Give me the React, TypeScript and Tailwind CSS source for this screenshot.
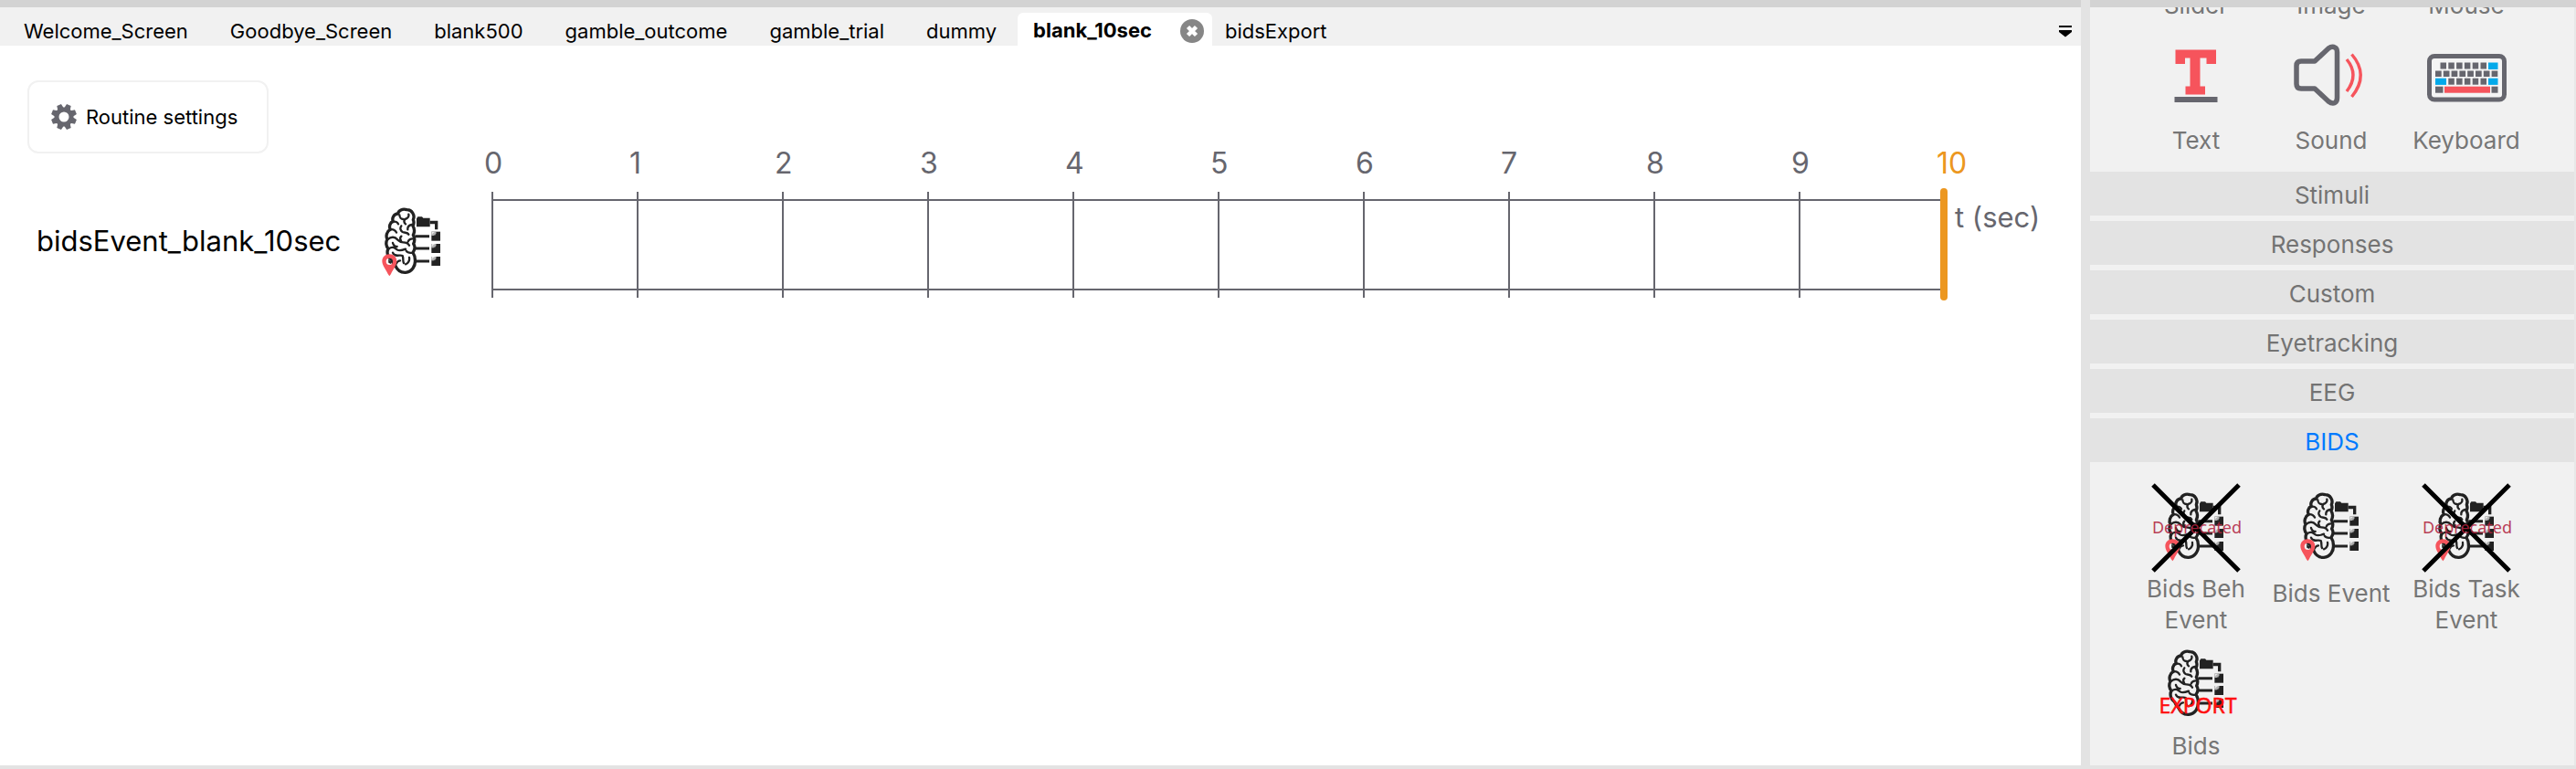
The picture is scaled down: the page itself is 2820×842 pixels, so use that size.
import React from "react";

const INK = "#222222";
const SLATE = "#66666e";
const CORAL = "#f6545c";
const SKY = "#02a9ea";

/* Brain with a folder tree; `marker` adds the location pin. */
function BrainDrawing({ marker }: { marker: boolean }) {
  return (
    <svg viewBox="12 24 288 288" width="96" height="96" fill="none">
      <g stroke={INK} strokeWidth="10" strokeLinecap="round" strokeLinejoin="round">
        <path d="M136 59C122 54 108 62 107 72C94 72 86 86 91 97C80 101 77 115 82 124C70 130 66 146 72 156C66 166 68 180 75 187C69 198 73 216 86 224C90 234 92 238 98 242C104 256 116 266 132 265C152 263 166 244 163 222C163 212 160 206 156 200C163 190 163 178 158 171C163 160 162 150 157 142C162 132 161 120 156 112C160 104 160 98 157 92C164 76 152 58 136 59Z" />
      </g>
      <g stroke={INK} strokeWidth="7" strokeLinecap="round" strokeLinejoin="round">
        <path d="M112 76C112 84 118 90 124 90M142 74C144 82 138 88 130 90C126 96 127 102 132 106M91 99C98 96 106 100 108 106M152 108C144 110 138 116 139 124M82 124C92 122 100 128 102 134M118 112C112 120 116 128 122 132C130 136 138 132 142 140M74 156C84 146 98 148 104 156C112 162 112 166 124 166C132 166 140 168 144 176M118 146C114 150 114 156 117 160M77 187C88 178 96 184 104 190C112 196 122 192 132 188M90 168C92 176 98 180 104 180M156 154C148 154 142 158 140 164M156 200C146 202 138 200 134 194M98 208C108 212 114 206 122 210C126 220 122 228 126 234M144 216C146 226 140 236 132 238M100 238C104 230 108 226 114 226M90 200C92 206 96 208 102 208" />
      </g>
      <path d="M168 88L172 82H186L190 86H212V115H168Z" fill={INK} />
      <path d="M212 95H238V124H228V106H212Z" fill={INK} />
      <path d="M163 146H210M163 186H210M163 228H210" stroke={INK} strokeWidth="9" />
      {[131, 171, 213].map((y) => (
        <g key={y}>
          <rect x="217" y={y} width="29" height="30" fill={INK} />
          <path d={`M217 ${y}H232V${y + 7}L224 ${y + 13}H217Z`} fill="#e9e9e9" />
          <path d={`M228 ${y}L217 ${y + 10}V${y + 13}H231V${y}Z`} fill="#777777" opacity="0.5" />
        </g>
      ))}
      {marker && (
        <g>
          <path
            fillRule="evenodd"
            fill={CORAL}
            d="M79 205C65 205 55 215 55 228C55 243 68 255 74 270L79 277L84 270C90 255 103 243 103 228C103 215 93 205 79 205ZM79 218A11 11 0 1 1 79 240A11 11 0 1 1 79 218Z"
          />
          <path d="M75 222L86 230L84 237L76 233Z" fill={INK} />
        </g>
      )}
    </svg>
  );
}

function DeprecatedIcon() {
  return (
    <span className="relative block size-24">
      <BrainDrawing marker />
      <svg className="absolute inset-0 overflow-visible" viewBox="0 0 96 96" width="96" height="96">
        <path d="M1 1L95 95M95 1L1 95" stroke="#000000" strokeWidth="5" />
        <text x="49" y="54" textAnchor="middle" fontFamily="Noto Sans, sans-serif" fontSize="18" fill="#b0203c" opacity="0.85">
          Deprecated
        </text>
      </svg>
    </span>
  );
}

function ExportIcon() {
  return (
    <span className="relative block size-24">
      <BrainDrawing marker={false} />
      <svg className="absolute inset-0 overflow-visible" viewBox="0 0 96 96" width="96" height="96">
        <text
          x="50"
          y="79"
          textAnchor="middle"
          fontFamily="Noto Sans, sans-serif"
          fontSize="23"
          fill="#ff1010"
          stroke="#ff1010"
          strokeWidth="0.500"
        >
          EXPORT
        </text>
      </svg>
    </span>
  );
}

function TextIcon() {
  return (
    <svg viewBox="0 0 96 96" width="96" height="96">
      <path
        fill={CORAL}
        d="M25.5 20.5H70V36H59.5V29.5H52.5V60.5H58V69.5H36.5V60.5H41.5V29.5H36V36H25.5Z"
      />
      <rect x="24.5" y="72" width="47" height="6" fill={SLATE} />
    </svg>
  );
}

function SoundIcon() {
  return (
    <svg viewBox="0 0 96 96" width="96" height="96" fill="none">
      <path
        d="M15 33H30L45 19Q49 16 52 18Q54.500 19 54.500 23V73Q54.500 77 52 78.500Q49 80 45 77L30 63H15Q10 63 10 58V38Q10 33 15 33Z"
        stroke={SLATE}
        strokeWidth="5.500"
        strokeLinejoin="round"
      />
      <path d="M65 31Q79 48 65 66M70.500 25.500Q90 48 70.500 72" stroke={CORAL} strokeWidth="3.400" />
    </svg>
  );
}

function KeyboardIcon() {
  const six = [0, 1, 2, 3, 4, 5];
  return (
    <svg viewBox="0 0 96 96" width="96" height="96" fill={SLATE}>
      <rect x="7.500" y="27.500" width="82" height="47.500" rx="5.500" fill="#f4f4f4" stroke={SLATE} strokeWidth="5" />
      {six.map((i) => (
        <rect key={`a${i}`} x={19.5 + i * 8.8} y="34.500" width="6.500" height="7" />
      ))}
      <rect x="72" y="34.500" width="10.500" height="7.500" fill={SKY} />
      {[0, 1, 2, 3, 4, 5, 6, 7].map((i) => (
        <rect key={`b${i}`} x={14 + i * 8.8} y="43.500" width="6.700" height="6.500" />
      ))}
      <rect x="14" y="51.700" width="12" height="7.200" fill={SKY} />
      {six.slice(0, 5).map((i) => (
        <rect key={`c${i}`} x={28.3 + i * 8.8} y="51.700" width="6.500" height="7" />
      ))}
      <rect x="72" y="51.700" width="10.500" height="7.200" fill={SKY} />
      <rect x="14" y="60.700" width="8.500" height="7" />
      <rect x="24" y="60.700" width="50" height="7" fill={CORAL} />
      <rect x="75.500" y="60.700" width="7" height="7" />
    </svg>
  );
}

function GearIcon() {
  return (
    <svg viewBox="-14 -14 28 28" width="28" height="28" fill={SLATE}>
      <circle r="8" fill="none" stroke={SLATE} strokeWidth="5" />
      {[22.5, 67.5, 112.5, 157.5, 202.5, 247.5, 292.5, 337.5].map((a) => (
        <path key={a} d="M-3.500 -9L-2.500 -14H2.500L3.500 -9Z" transform={`rotate(${a})`} />
      ))}
    </svg>
  );
}

const tabsBefore = ["Welcome_Screen", "Goodbye_Screen", "blank500", "gamble_outcome", "gamble_trial", "dummy"];

function TabStrip() {
  return (
    <div className="flex h-[42px] items-end bg-[#f1f1f1] pr-2 pl-[3px] text-[22px] leading-9">
      {tabsBefore.map((name) => (
        <button key={name} type="button" className="h-9 px-[23px] pt-[2px]">
          {name}
        </button>
      ))}
      <div className="flex h-9 items-center gap-[30px] rounded-t-md bg-white pr-2 pl-[17px]">
        <button type="button" className="pt-[2px] font-bold">
          blank_10sec
        </button>
        <button type="button" aria-label="Close tab" className="pt-1">
          <svg viewBox="0 0 28 28" width="28" height="28">
            <circle cx="14" cy="14" r="13" fill="#868686" />
            <path d="M9.500 9.500L18.500 18.500M18.500 9.500L9.500 18.500" stroke="#ffffff" strokeWidth="4.500" />
          </svg>
        </button>
      </div>
      <button type="button" className="h-9 px-[14px] pt-[2px]">
        bidsExport
      </button>
      <button type="button" aria-label="List all tabs" className="ml-auto flex h-9 items-center pt-1">
        <svg viewBox="0 0 18 16" width="18" height="16">
          <path d="M2 2H16V4H2ZM2 7H16V9L9 14.500L2 9Z" fill="#000000" />
        </svg>
      </button>
    </div>
  );
}

const seconds = [0, 1, 2, 3, 4, 5, 6, 7, 8, 9];

function Timeline() {
  return (
    <div className="grid grid-cols-[404px_134px_1fr_150px]">
      <div className="col-start-3 flex h-[50px] text-[32px] leading-[38px] text-[#66666e]">
        {seconds.map((s) => (
          <span key={s} className="flex-1">
            <span className="-ml-2 block">{s}</span>
          </span>
        ))}
        <span className="w-0">
          <span className="-ml-2 block text-[#ec9720]">10</span>
        </span>
      </div>
      <button type="button" className="col-start-1 row-start-2 pb-2 pl-10 text-left text-[31px] whitespace-nowrap">
        bidsEvent_blank_10sec
      </button>
      <div className="row-start-2 pt-2">
        <BrainDrawing marker />
      </div>
      <div className="relative row-start-2 flex h-[116px]">
        {seconds.map((s) => (
          <div key={s} className="flex-1 border-l-2 border-[#66666e] py-2">
            <div className="h-full border-y-2 border-[#66666e]" />
          </div>
        ))}
        <div className="absolute -top-1 -right-1 -bottom-[3px] w-2 rounded-full bg-[#ec9720]" />
      </div>
      <div className="row-start-2 pt-2 pl-3 text-[31px] leading-[40px] whitespace-nowrap text-[#66666e]">
        t (sec)
      </div>
    </div>
  );
}

function Component({ label, icon, lines = 1 }: { label: string; icon?: React.ReactNode; lines?: number }) {
  return (
    <button type="button" className="flex w-full flex-col items-center">
      {icon}
      <span className={lines === 2 ? "h-[76px] w-[120px] pt-[2px]" : "h-[52px] pt-[7px] whitespace-nowrap"}>
        {label}
      </span>
    </button>
  );
}

const sections = ["Stimuli", "Responses", "Custom", "Eyetracking", "EEG", "BIDS"];

function ComponentsPanel() {
  return (
    <aside className="flex w-[532px] shrink-0 flex-col overflow-hidden bg-[#f1f1f1] text-[26px] leading-[34px] text-[#767676]">
      <div className="h-2 shrink-0 bg-[#d3d3d3]" />
      <div className="flex min-h-0 grow flex-col border-r-2 border-[#e8e8e8]">
        <div className="flex h-[180px] shrink-0 flex-col justify-end overflow-hidden pb-[6px]">
          <div className="ml-[42px] grid w-[444px] grid-cols-3">
            <Component label="Slider" />
            <Component label="Image" />
            <Component label="Mouse" />
            <Component label="Text" icon={<TextIcon />} />
            <Component label="Sound" icon={<SoundIcon />} />
            <Component label="Keyboard" icon={<KeyboardIcon />} />
          </div>
        </div>
        <div className="flex shrink-0 flex-col gap-[6px]">
          {sections.map((name) => (
            <button
              key={name}
              type="button"
              className={
                name === "BIDS"
                  ? "h-12 bg-[#e3e3e3] pt-[3px] text-[#007aff]"
                  : "h-12 bg-[#e3e3e3] pt-[3px] text-[#737373]"
              }
            >
              {name}
            </button>
          ))}
        </div>
        <div className="ml-[42px] grid w-[444px] grid-cols-3 items-start pt-6">
          <Component label="Bids Beh Event" lines={2} icon={<DeprecatedIcon />} />
          <Component label="Bids Event" icon={<BrainDrawing marker />} />
          <Component label="Bids Task Event" lines={2} icon={<DeprecatedIcon />} />
          <Component label="Bids" lines={2} icon={<ExportIcon />} />
        </div>
      </div>
    </aside>
  );
}

export default function App() {
  return (
    <div className="flex h-screen flex-col overflow-hidden bg-[#e3e3e3] font-['Inter',sans-serif] text-black">
      <div className="flex min-h-0 flex-1 gap-[10px]">
        <main className="flex min-w-0 flex-1 flex-col bg-white">
          <div className="h-2 bg-[#d3d3d3]" />
          <TabStrip />
          <div className="flex h-[110px] px-[30px] pt-[38px]">
            <button
              type="button"
              className="flex h-20 w-[264px] shrink-0 items-center gap-[10px] rounded-xl border-2 border-[#f1f1f1] pl-6 text-[22px]"
            >
              <GearIcon />
              Routine settings
            </button>
          </div>
          <Timeline />
        </main>
        <ComponentsPanel />
      </div>
      <div className="h-1 shrink-0" />
    </div>
  );
}
